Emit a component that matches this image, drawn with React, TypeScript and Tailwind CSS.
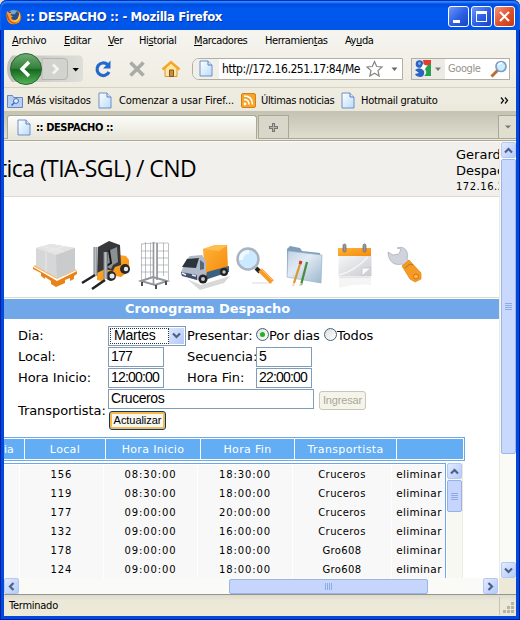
import React from "react";

const tahoma = "font-['DejaVu_Sans_Condensed','DejaVu_Sans',sans-serif] text-[11px] tracking-[-0.4px]";
const verdana = "font-['DejaVu_Sans',sans-serif]";
const arial = "font-['Liberation_Sans',sans-serif]";

function Page({ className = "" }: { className?: string }) {
  return (
    <svg className={`shrink-0 ${className}`} width="14" height="17" viewBox="0 0 14 17">
      <defs>
        <linearGradient id="pg" x1="0" y1="0" x2="1" y2="1">
          <stop offset="0" stopColor="#fff" /><stop offset="1" stopColor="#b9dcfa" />
        </linearGradient>
      </defs>
      <path d="M1 1h8l4 4v11H1z" fill="url(#pg)" stroke="#6d8fc9" />
      <path d="M9 1v4h4" fill="#dcecff" stroke="#5b7fc0" />
    </svg>
  );
}

function Firefox() {
  return (
    <svg width="16" height="16" viewBox="0 0 16 16" className="shrink-0">
      <circle cx="8" cy="8" r="7.3" fill="#e2701c" />
      <circle cx="7.6" cy="6.5" r="5.5" fill="#294f88" />
      <path d="M4 2q3-2 7 0l-2 3-3 .5z" fill="#6fa7d8" />
      <path d="M1 2l2 2 3 0-1.5 2 2.5 1.5-2 1q1 3 4 2.5 4-.5 4-5 3 6-2.500 8.500-5 2-8-1.500Q-.5 9 1 2z" fill="#f79b2b" />
      <path d="M13 3q2.500 5-.500 8-3 3-7 1 5 0 6.500-3Q13.500 6 13 3z" fill="#ffd34e" />
      <path d="M1 4Q0 10 4 13q4 3 8 .5-6 1-8.500-3z" fill="#cf4b15" />
    </svg>
  );
}

function Chevron({ dir }: { dir: "up" | "down" | "left" | "right" }) {
  const r = { up: 0, right: 90, down: 180, left: 270 }[dir];
  return (
    <svg width="9" height="9" viewBox="0 0 9 9">
      <path d="M1 6.500L4.500 3 8 6.500" transform={`rotate(${r} 4.500 4.500)`} fill="none" stroke="#4d6185" strokeWidth="2.200" />
    </svg>
  );
}

function ScrollButton({ dir }: { dir: "up" | "down" | "left" | "right" }) {
  return (
    <div className="flex h-[16px] w-[15px] shrink-0 items-center justify-center rounded-[2px] border border-[#b4c8f6] bg-linear-to-br from-[#e1eaff] to-[#b5cbfb]">
      <Chevron dir={dir} />
    </div>
  );
}

const menu: [string, string, string, string][] = [
  ["", "A", "rchivo", "w-[52px]"],
  ["", "E", "ditar", "w-[44px]"],
  ["", "V", "er", "w-[31px]"],
  ["Hi", "s", "torial", "w-[55px]"],
  ["", "M", "arcadores", "w-[71px]"],
  ["Herramien", "t", "as", "w-[80px]"],
  ["Ay", "u", "da", "w-[50px]"],
];

function TitleBar() {
  return (
    <div className="flex h-[30px] shrink-0 items-center rounded-t-[7px] bg-linear-to-b from-[#003fd4] via-[#0058ee] via-30% to-[#0055e8] pl-[6px] pr-[5px] pt-[3px] shadow-[inset_0_1px_#0030b8,inset_0_3px_2px_#2c8cff]">
      <Firefox />
      <span className="ml-[4px] w-[210px] whitespace-nowrap pt-px font-['DejaVu_Sans_Condensed'] text-[13px] font-bold tracking-[-0.36px] text-white [text-shadow:1px_1px_#06309c]">:: DESPACHO :: - Mozilla Firefox</span>
      <div className="ml-auto flex gap-[2px]">
        <div className="relative h-[21px] w-[21px] rounded-[3px] border border-white bg-linear-to-br from-[#6f97fa] via-[#2e61e6] to-[#1843c5]"><div className="absolute bottom-[3px] left-[4px] h-[3px] w-[7px] bg-white" /></div>
        <div className="flex h-[21px] w-[21px] items-center justify-center rounded-[3px] border border-white bg-linear-to-br from-[#6f97fa] via-[#2e61e6] to-[#1843c5]"><div className="h-[11px] w-[11px] border border-t-[3px] border-white" /></div>
        <div className="flex h-[21px] w-[21px] items-center justify-center rounded-[3px] border border-white bg-linear-to-br from-[#ef9478] via-[#e0522c] to-[#c53a12]">
          <svg width="13" height="13" viewBox="0 0 13 13"><path d="M2 2l9 9M11 2l-9 9" stroke="#fff" strokeWidth="2.100" /></svg>
        </div>
      </div>
    </div>
  );
}

function NavBar() {
  return (
    <div className="flex h-[37px] shrink-0 items-center">
      <svg width="84" height="34" viewBox="4 52 84 34" className="shrink-0">
        <defs>
          <linearGradient id="keyhole" x1="0" x2="1"><stop offset="0" stopColor="#bfc0bb" /><stop offset="1" stopColor="#dedfd8" /></linearGradient>
          <linearGradient id="green" x1="0" y1="0" x2="0" y2="1"><stop offset="0" stopColor="#6fae73" /><stop offset=".48" stopColor="#347f3b" /><stop offset=".52" stopColor="#17681f" /><stop offset="1" stopColor="#55b65a" /></linearGradient>
        </defs>
        <path d="M12 55.500H79q4 0 4 5V77q0 5-4 5H12q-5-5-5-13t5-13.500z" fill="url(#keyhole)" />
        <path d="M42 58.500h22q3.500 0 3.500 3.500v14q0 3.500-3.500 3.500H42z" fill="#d2d3ce" stroke="#b5b6b1" />
        <circle cx="26" cy="69" r="15.500" fill="url(#green)" stroke="#2b6533" />
        <path d="M29 62l-7 7 7 7" fill="none" stroke="#fff" strokeWidth="3.400" />
        <path d="M53 64.500l4.500 4.500-4.500 4.500" fill="none" stroke="#f4f4f2" strokeWidth="2.600" />
        <path d="M72.500 68h6.500l-3.250 3.500z" fill="#000" />
      </svg>
      <svg width="100" height="24" viewBox="88 57 100 24" className="shrink-0">
        <path d="M107.500 64.500A6.300 6.300 0 1 0 109 72" fill="none" stroke="#2467cf" strokeWidth="3.200" />
        <path d="M110.500 60.500v8h-7.500z" fill="#2467cf" />
        <path d="M130.500 62.500l13 13M143.500 62.500l-13 13" stroke="#aaaaa7" strokeWidth="3.600" />
        <path d="M165 68v8.500h12V68l-6-5z" fill="#ffe79c" stroke="#d8983d" />
        <path d="M162.500 69.500l8.500-7.500 8.500 7.500" fill="none" stroke="#f5a52c" strokeWidth="2.400" />
        <path d="M169.500 70h4v6.500h-4z" fill="#d28a3c" stroke="#87552a" />
      </svg>
      <div className="ml-[4px] flex h-[22px] w-[211px] shrink-0 items-center overflow-hidden rounded-l-[7px] border border-[#b1aea3] bg-white">
        <div className="flex h-full w-[26px] shrink-0 items-center bg-[#f0efea] pl-[6px]"><Page /></div>
        <span className={`${tahoma} ml-[3px] w-[144px] shrink-0 whitespace-nowrap pt-px !text-[12px] !tracking-[-0.42px]`}>http://172.16.251.17:84/Me</span>
        <svg width="36" height="18" viewBox="0 0 36 18" className="shrink-0">
          <path d="M8 1.500l2.200 5 5.300.5-4 3.600 1.200 5.400L8 13.200 3.300 16l1.200-5.400-4-3.600 5.300-.5z" transform="translate(.5 0)" fill="#fff" stroke="#858585" strokeWidth="1.200" />
          <path d="M25.500 7.500h6l-3 3.500z" fill="#676767" />
        </svg>
      </div>
      <div className="ml-[8px] flex h-[22px] w-[99px] shrink-0 items-center border border-[#b1aea3] bg-white">
        <div className="flex h-full w-[33px] items-center bg-[#ebeae4] pl-[3px]">
          <svg width="29" height="17" viewBox="0 0 29 17">
            <path d="M8 0h8v8l-3-3-4 1z" fill="#df3f2d" /><path d="M16 4v12H9q4-3 1-7 1-4 6-5z" fill="#27a052" />
            <circle cx="4.500" cy="4" r="3.800" fill="#2963c5" /><circle cx="4.500" cy="3.500" r="1.400" fill="#83a9ea" />
            <path d="M0 10q5-4 9 1 1 5-3 6-5 0-6-3l4-1z" fill="#2963c5" /><path d="M8 4l4 2-3 4-3-2z" fill="#fff" />
            <path d="M20 7.500h6l-3 3.500z" fill="#777" />
          </svg>
        </div>
        <span className={`${tahoma} ml-[3px] w-[42px] pt-[2px] text-[#96938a]`}>Google</span>
        <svg width="18" height="18" viewBox="0 0 18 18" className="shrink-0"><path d="M1.500 16.500l6-6" stroke="#bc6b31" strokeWidth="3" /><circle cx="11" cy="6.500" r="5" fill="#ccecff" stroke="#7c9ec5" strokeWidth="1.700" /><path d="M8 5q1-2 4-2" fill="none" stroke="#fff" strokeWidth="1.500" /></svg>
      </div>
    </div>
  );
}

function Bookmarks() {
  return (
    <div className={`${tahoma} flex h-[24px] shrink-0 items-center border-t border-[#d5d2c2] pl-[3px] pt-[2px] whitespace-nowrap`}>
      <svg width="16" height="14" viewBox="0 0 16 14"><path d="M.5 1.500h5l1 2h9v10H.5z" fill="#b7d0f3" stroke="#6587c7" /><path d="M4.500 11.500l3-3" stroke="#3c6ab6" strokeWidth="1.500" /><circle cx="9" cy="7" r="2.400" fill="#e7f4ff" stroke="#3c6ab6" /></svg>
      <span className="ml-[4px] w-[71px] pt-px tracking-[-0.25px]">Más visitados</span>
      <Page />
      <span className="ml-[7px] w-[122px] pt-px tracking-[-0.08px]">Comenzar a usar Firef...</span>
      <svg width="15" height="15" viewBox="0 0 15 15"><rect x=".5" y=".5" width="14" height="14" rx="1.500" fill="#f4a52b" stroke="#d88113" /><circle cx="4" cy="11" r="1.400" fill="#fff" /><path d="M3 6.500q5 0 5 5M3 3q8.500 0 8.500 8.500" fill="none" stroke="#fff" strokeWidth="1.500" /></svg>
      <span className="ml-[5px] w-[80px] pt-px tracking-[-0.36px]">Últimas noticias</span>
      <Page />
      <span className="ml-[6px] w-[139px] pt-px tracking-[-0.28px]">Hotmail gratuito</span>
      <svg width="9" height="7" viewBox="0 0 9 7"><path d="M1 .5l2.500 3L1 6.500M5 .5l2.500 3L5 6.500" fill="none" stroke="#111" strokeWidth="1.300" /></svg>
    </div>
  );
}

function Tabs() {
  return (
    <div className="flex h-[31px] shrink-0 flex-col border-b border-[#fafaf7] bg-linear-to-b from-[#c4c2b3] to-[#e2e0d0]">
      <div className="flex h-[28px] shrink-0 pt-[4px]">
        <div className="w-[3px] border-b border-[#aaa797]" />
        <div className="flex w-[250px] items-center rounded-t-[3px] border border-b-0 border-[#aaa797] bg-linear-to-b from-[#fcfcf9] to-[#e7e5d8] pl-[9px]">
          <Page />
          <span className={`${tahoma} ml-[5px] pt-px font-bold !tracking-[-0.4px] whitespace-nowrap`}>:: DESPACHO ::</span>
        </div>
        <div className="ml-px flex w-[31px] items-center justify-center border border-[#aaa797] bg-[#d9d7c9]">
          <svg width="9" height="9" viewBox="0 0 9 9"><path d="M4.500 0v9M0 4.500h9" stroke="#777771" strokeWidth="3" /><path d="M4.500 1v7M1 4.500h7" stroke="#b4b4ae" /></svg>
        </div>
        <div className="grow border-b border-[#aaa797]" />
        <div className="flex w-[18px] items-center justify-center border border-r-0 border-[#aaa797] bg-[#e0decf]"><svg width="6" height="4" viewBox="0 0 6 4"><path d="M0 .5h6L3 3.500z" fill="#777" /></svg></div>
      </div>
      <div className="h-[2px] border-b border-[#aaa797] bg-[#eceadd]" />
    </div>
  );
}

function ToolIcons() {
  return (
    <svg width="495" height="60" viewBox="4 238 495 60" className="shrink-0">
      <defs>
        <linearGradient id="or" x1="0" x2="1" y2="1"><stop offset="0" stopColor="#ffb33d" /><stop offset="1" stopColor="#f58a08" /></linearGradient>
        <linearGradient id="gy" x1="0" x2="1" y2="1"><stop offset="0" stopColor="#f7f7f7" /><stop offset="1" stopColor="#c9cbd0" /></linearGradient>
        <linearGradient id="fold" x1="0" x2="1" y2="1"><stop offset="0" stopColor="#c0d2e4" /><stop offset=".4" stopColor="#e2ebf3" /><stop offset="1" stopColor="#9cb7cf" /></linearGradient>
      </defs>
      <g>
        <path d="M33 267l24 14 20-10v3l-3 2v3l-4 2v-3l-5 2v3l-9 4-5-3v-3l-6-4v2l-4-3v-3l-8-4z" fill="#e98219" />
        <path d="M33 266l24 13 20-9-22-10z" fill="#ffb85f" />
        <path d="M36 248l15-4 24 4v22l-18 8-21-12z" fill="#d6d7d8" />
        <path d="M36 248l15-4 24 4-19 7z" fill="#e4e4e4" /><path d="M56 255l19-7v22l-18 8z" fill="#c9cbcd" /><path d="M46 252v20M42 246l22 6M48 251l18-5" stroke="#eeeeee" strokeWidth=".7" fill="none" />
      </g>
      <g>
        <path d="M119 255l7 1 3 4v11l-8 6-10-2-9 6-5-1v-15z" fill="url(#or)" />
        <path d="M98 247l11-6 11 4 1 20-6 2-2 4-8-2-8 4z" fill="#38383b" /><path d="M108 251l9-4 1 15-5 3-2 4-4-2z" fill="#8b9093" /><path d="M109 250l2 13-6 4" fill="none" stroke="#17181a" strokeWidth="2" />
        <circle cx="111" cy="276" r="5" fill="#292929" /><circle cx="112" cy="276" r="2.500" fill="#e9ebeb" /><circle cx="125" cy="269" r="5" fill="#292929" /><circle cx="126" cy="269" r="2.200" fill="#e9ebeb" />
        <path d="M95.500 247v29M105.500 252v27" stroke="#7c8289" strokeWidth="4" /><path d="M95.500 247v29M105.500 252v27" stroke="#b8bdc2" strokeWidth="2" />
        <path d="M95 275l-13 8M105 280l-13 9" stroke="#222327" strokeWidth="2.600" />
      </g>
      <g fill="none" stroke="#91979a">
        <path d="M141.500 244v37M145.500 242v38M150.500 243v36M153.500 243v42M157.500 243v35M163.500 243v33M168.500 243v37M141 244l12-1 15 0M141 251h12M157 251h11M141 258h12M157 258h11M141 265h12M157 265h11M141 272h12M157 272h11" strokeWidth=".8" opacity=".75" />
        <path d="M153.500 242v42M157 243v37" strokeWidth="1.600" /><path d="M141 281l12-4 14 4-12 4z" strokeWidth="2" /><path d="M142 282v4M156 285v4M166 281v4" stroke="#4c5052" strokeWidth="2" />
      </g>
      <g>
        <path d="M187 279l14 6 29-9-6 7-24 7z" fill="#d7d8d9" />
        <path d="M203 249l12-4h12l1 24-23 6z" fill="url(#or)" /><path d="M203 249l12-4h13l-9 6z" fill="#ffbd4e" /><path d="M207 272l22-6v6l-24 8z" fill="#3b6280" />
        <path d="M181 272l6-13 3-3 12-1 4 6v14l-6 6-19-6z" fill="#b2b9c8" /><path d="M182 267l5-8 12-1-3 10z" fill="#2c353b" /><path d="M200 260l4 3v6l-4 1z" fill="#52697b" /><path d="M181 272l16 3v5l-15-4z" fill="#42506a" /><path d="M182 273l4 2M192 275l4 1" stroke="#dfeeff" strokeWidth="1.500" />
        <circle cx="203" cy="279" r="4.500" fill="#222" /><circle cx="203" cy="279" r="2" fill="#bfc4c8" /><circle cx="224" cy="272" r="4" fill="#222" /><circle cx="224" cy="272" r="1.700" fill="#bfc4c8" />
      </g>
      <g>
        <path d="M252 283h20" stroke="#ededed" strokeWidth="2" />
        <circle cx="248" cy="259" r="10.500" fill="#cbeaff" stroke="#a9b4c0" strokeWidth="2.500" /><path d="M241 260q0-8 8-8" stroke="#effaff" strokeWidth="4" fill="none" />
        <path d="M256 268l4 4" stroke="#222" strokeWidth="4" /><path d="M260 270l12 12" stroke="#f99a26" strokeWidth="5" /><path d="M261 269l11 11" stroke="#ffc478" />
      </g>
      <g>
        <path d="M287 249l3-3 10 2 2 3 18 2v28l-33-5z" fill="#7f9db8" /><path d="M288 251l34 4-1 28-34-6z" fill="url(#fold)" stroke="#9cb3c7" strokeWidth=".7" />
        <path d="M301 261l-7 22" stroke="#d69b35" strokeWidth="2.300" /><path d="M301 261l-1 3" stroke="#d33" strokeWidth="3" /><path d="M307 262l-6 23" stroke="#498c45" strokeWidth="2.300" /><path d="M294 283l-1 3M301 283l-1 3" stroke="#ead4aa" strokeWidth="2" />
      </g>
      <g>
        <rect x="338.500" y="256" width="33" height="20" fill="url(#gy)" /><path d="M338 248h33v8h-33z" fill="url(#or)" /><path d="M339 275q14-3 29-18" fill="none" stroke="#fff" strokeWidth="1.500" opacity=".7" /><path d="M362 276v-8h9z" fill="#fafafa" stroke="#bebebe" strokeWidth=".7" />
        <rect x="343" y="244" width="3" height="8" rx="1.500" fill="#999" stroke="#666" strokeWidth=".7" /><rect x="363" y="244" width="3" height="8" rx="1.500" fill="#999" stroke="#666" strokeWidth=".7" />
        <path d="M339 277h32v8q-16-2-32 3z" fill="#f5f5f5" /><path d="M339 277h32" stroke="#d6d6d6" />
      </g>
      <g>
        <path d="M388 252l5 3 6-1 2-5-4-1q6-2 9 2 3 4 1 9l5 5-5 4-5-4q-8 2-12-4-2-4-2-8z" fill="#d1d3dc" stroke="#a8abb6" strokeWidth=".7" />
        <path d="M402 266l7-6 12 13v6l-6 3-5-3z" fill="#f59a24" stroke="#e6820a" strokeWidth=".7" /><path d="M405 268l5-4 3 1" fill="none" stroke="#a9782e" /><circle cx="416" cy="276.500" r="2.500" fill="#ffb64d" stroke="#cc730f" />
      </g>
    </svg>
  );
}

function Field({ children, className = "" }: { children: React.ReactNode; className?: string }) {
  return <div className={`${arial} flex h-[20px] items-center whitespace-nowrap border border-[#7f9db9] bg-white pl-[2px] text-[14px] ${className}`}>{children}</div>;
}

function Radio({ checked = false }: { checked?: boolean }) {
  return <span className="mb-[2px] flex h-[13px] w-[13px] shrink-0 items-center justify-center rounded-full border border-[#406587] bg-linear-to-br from-[#deded8] to-white">{checked && <i className="h-[5px] w-[5px] rounded-full bg-[#24af24]" />}</span>;
}

function Form() {
  return (
    <div className={`${verdana} h-[118px] shrink-0 pl-[14px] pt-[6px] text-[13px] tracking-[-0.08px]`}>
      <div className="grid grid-cols-[90px_79px_69px_1fr] grid-rows-[21px_21px_21px] items-center whitespace-nowrap">
        <span>Dia:</span>
        <div className={`${arial} flex h-[20px] w-[78px] border border-[#7f9db9] p-px text-[14px] tracking-[-0.2px]`}>
          <div className="flex w-[59px] items-center border border-dotted border-[#333] pl-[3px]">Martes</div>
          <div className="flex w-[15px] items-center justify-center bg-linear-to-br from-[#dce7ff] to-[#b3c9f8]"><Chevron dir="down" /></div>
        </div>
        <span>Presentar:</span>
        <div className="flex items-center"><Radio checked /><span className="w-[55px]">Por dias</span><Radio /><span>Todos</span></div>
        <span>Local:</span><Field className="w-[56px] tracking-[-0.8px]">177</Field><span>Secuencia:</span><Field className="w-[56px]">5</Field>
        <span>Hora Inicio:</span><Field className="w-[56px] tracking-[-0.8px]">12:00:00</Field><span>Hora Fin:</span><Field className="w-[56px] tracking-[-0.8px]">22:00:00</Field>
      </div>
      <div className="flex">
        <div className="flex w-[90px] items-center pt-[4px]">Transportista:</div>
        <div>
          <div className="flex h-[21px] items-center"><Field className="w-[206px] tracking-[-0.6px]"><span className="tracking-[-0.45px]">Cruceros</span></Field>
            <div className={`${arial} ml-[5px] mt-[3px] flex h-[19px] w-[47px] items-center justify-center rounded-[3px] border border-[#c9c7ba] bg-[#f5f4ea] text-[11px] tracking-[-0.15px] text-[#a9a797]`}>Ingresar</div>
          </div>
          <div className={`${arial} ml-px mt-[2px] flex h-[19px] w-[57px] items-center justify-center rounded-[3px] border border-[#003c74] bg-[#f7f6f1] text-[11px] tracking-[-0.05px] shadow-[inset_0_0_0_2px_#f8b64b]`}>Actualizar</div>
        </div>
      </div>
    </div>
  );
}

const rows = [
  ["156", "08:30:00", "18:30:00", "Cruceros"],
  ["119", "08:30:00", "18:00:00", "Cruceros"],
  ["177", "09:00:00", "20:00:00", "Cruceros"],
  ["132", "09:00:00", "16:00:00", "Cruceros"],
  ["178", "09:00:00", "18:00:00", "Gro608"],
  ["124", "09:00:00", "18:00:00", "Gro608"],
];

function Schedule() {
  return (
    <div className={`${verdana} flex min-h-0 grow flex-col`}>
      <div className="h-[24px] w-[461px] shrink-0 border border-l-0 border-[#6fa7e8] p-px pl-0">
        <div className="grid h-[20px] grid-cols-[20px_80px_94px_93px_101px_66px] gap-px overflow-hidden bg-white text-center text-[11px] leading-[21px] tracking-[0.35px] text-white">
          {["ia", "Local", "Hora Inicio", "Hora Fin", "Transportista", ""].map((h, i) => <div key={i} className={i === 0 ? "bg-[#62adf3] pl-0 text-left tracking-normal" : "bg-[#62adf3]"}>{h}</div>)}
        </div>
      </div>
      <div className="mt-[2px] flex min-h-0 grow">
        <div className="w-[442px] overflow-hidden border-r border-t border-[#6fa7e8] pt-px text-[10px] leading-[19px]">
          {rows.map((r) => (
            <div key={r[0]} className="mb-px grid h-[18px] grid-cols-[15px_83px_93px_94px_98px_53px] gap-px text-center">
              <span className="bg-[#f8f8f8]" />
              {r.map((c, i) => <span key={i} className={i === 3 ? "bg-[#f8f8f8] tracking-[0.4px]" : "bg-[#f8f8f8] tracking-[0.9px]"}>{c}</span>)}
              <span className="bg-[#f8f8f8] pl-px text-[10.5px] tracking-[0.35px]">eliminar</span>
            </div>
          ))}
        </div>
        <div className="ml-px flex w-[16px] flex-col border-r border-[#eceadd] bg-[#f8f8f3]">
          <ScrollButton dir="up" />
          <div className="mt-px flex h-[32px] w-[15px] flex-col items-center justify-center gap-px rounded-[2px] border border-[#98b1e4] bg-[#c5d5fd]">
            {[0, 1, 2, 3].map((i) => <i key={i} className="h-px w-[7px] bg-[#8caae6]" />)}
          </div>
        </div>
      </div>
    </div>
  );
}

function WebPage() {
  return (
    <div className="flex h-[436px] w-[495px] shrink-0 flex-col overflow-hidden bg-white">
      <div className="flex h-[55px] shrink-0 justify-between overflow-hidden border-b border-[#dfdad0] bg-[#f1f0ec]">
        <div className="ml-[-5px] mt-[10px] whitespace-nowrap font-['Open_Sans'] text-[23px] leading-[32px] tracking-[-0.58px]">tica (TIA-SGL) / CND</div>
        <div className={`${verdana} w-[43px] overflow-hidden pt-[5px] text-[13px] leading-[16px] whitespace-nowrap`}><div>Gerardo</div><div>Despacho</div><div className="text-[10px] tracking-[0.5px]">172.16.251</div></div>
      </div>
      <div className="h-[41px] shrink-0" />
      <ToolIcons />
      <div className={`${verdana} flex h-[21px] shrink-0 items-center bg-[#6fa7e8] pl-[121px] text-[13px] font-bold tracking-[-0.03px] text-white shadow-[inset_0_1px_#fff,0_-1px_#dedbd2]`}>Cronograma Despacho</div>
      <Form />
      <Schedule />
    </div>
  );
}

export default function App() {
  return (
    <div className="h-[620px] w-[520px] bg-[#e4e1d2]">
      <div className="flex h-[620px] w-[520px] flex-col overflow-hidden rounded-t-[7px] bg-[#0049df] text-black shadow-[inset_1px_0_#001ea0,inset_-1px_0_#001ea0,inset_0_-1px_#001ea0]">
        <TitleBar />
        <div className="mx-[4px] mb-[4px] flex h-[586px] flex-col bg-[#ece9d8]">
          <div className="flex h-[81px] shrink-0 flex-col bg-linear-to-b from-[#f5f4ef] to-[#ece9dc]">
            <div className={`${tahoma} flex h-[20px] shrink-0 items-center pl-[8px] pt-[2px] whitespace-nowrap`}>
              {menu.map(([a, b, c, w]) => <span key={b + c} className={w}>{a}<u>{b}</u>{c}</span>)}
            </div>
            <NavBar /><Bookmarks />
          </div>
          <Tabs />
          <div className="flex shrink-0">
            <WebPage />
            <div className="flex h-[436px] w-[17px] flex-col items-center border-l border-[#eceadd] bg-[#fafaf6]">
              <ScrollButton dir="up" />
              <div className="mt-px flex h-[295px] w-[15px] flex-col items-center justify-center gap-px rounded-[2px] border border-[#9bb5eb] bg-[#c9d8fd]">
                {[0, 1, 2, 3].map((i) => <i key={i} className="h-px w-[7px] bg-[#8caae6]" />)}
              </div>
              <div className="mt-auto"><ScrollButton dir="down" /></div>
            </div>
          </div>
          <div className="flex h-[16px] shrink-0 items-center bg-[#fafaf6]">
            <ScrollButton dir="left" />
            <div className="ml-[210px] flex h-[15px] w-[199px] items-center justify-center gap-px rounded-[2px] border border-[#9bb5eb] bg-[#c5d5fc]">
              {[0, 1, 2, 3].map((i) => <i key={i} className="h-[7px] w-px bg-[#8caae6]" />)}
            </div>
            <div className="ml-auto"><ScrollButton dir="right" /></div>
            <div className="ml-px h-full w-[17px] bg-[#ece9d8]" />
          </div>
          <div className={`${tahoma} flex grow items-center border-t border-[#97958b] bg-linear-to-b from-[#dddbcf] via-[#ece9d8] via-30% to-[#ece9d8] pl-[5px]`}>
            <span className="pt-[2px] tracking-[-0.25px]">Terminado</span>
            <div className="ml-auto flex h-[18px] w-[17px] items-end justify-end border-l border-[#c6c3b3] p-px">
              <svg width="12" height="12" viewBox="0 0 12 12" fill="#b8b4a2"><path d="M8 0h3v3H8zM4 4h3v3H4zM8 4h3v3H8zM0 8h3v3H0zM4 8h3v3H4zM8 8h3v3H8z" /></svg>
            </div>
          </div>
        </div>
      </div>
    </div>
  );
}
